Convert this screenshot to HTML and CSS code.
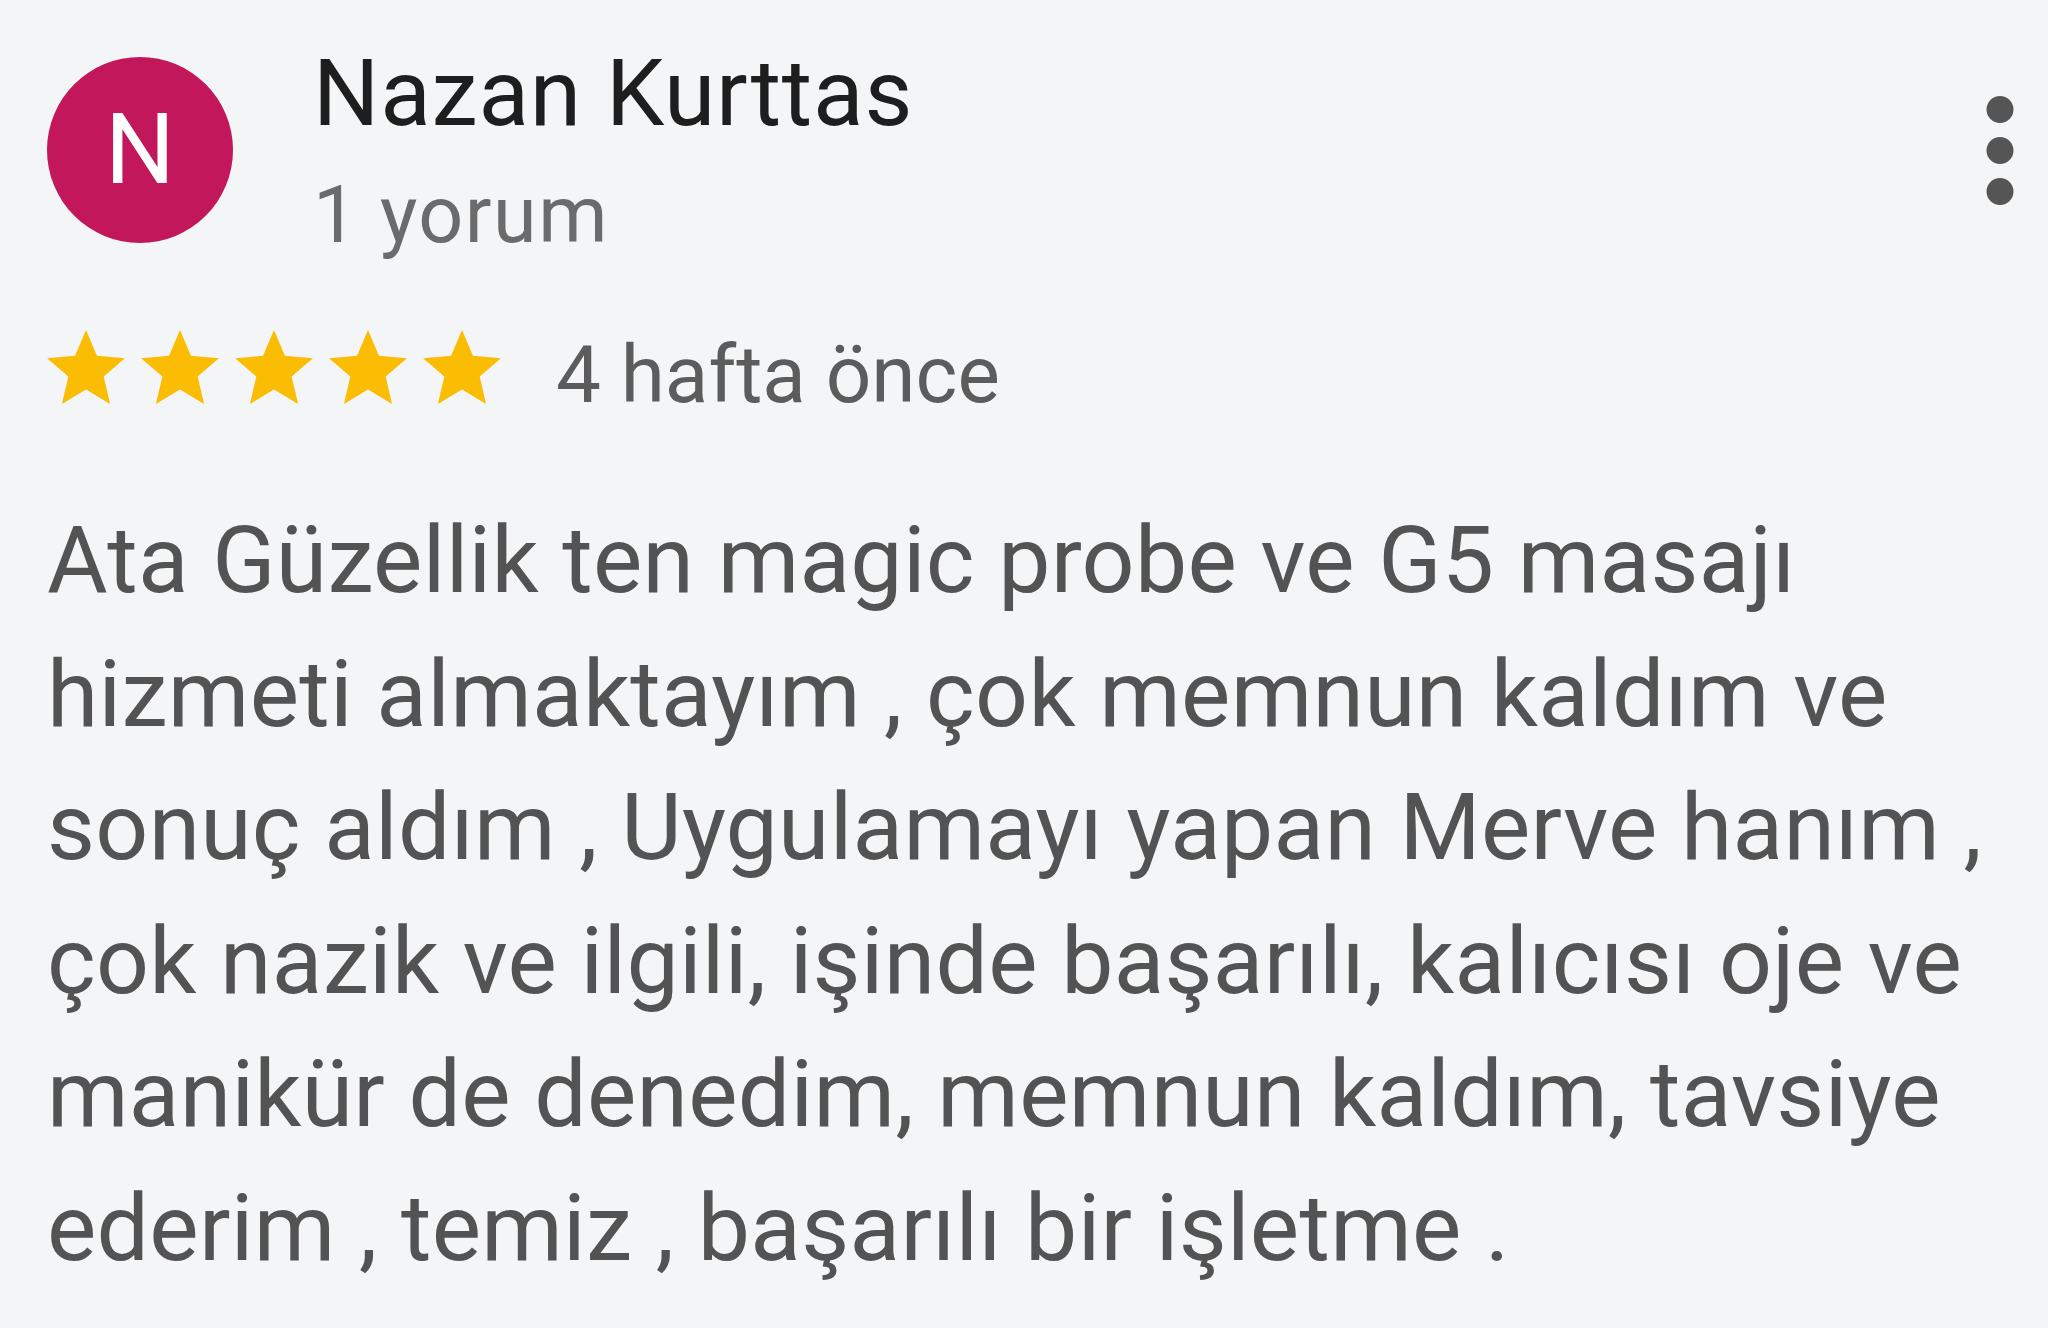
FILE: index.html
```html
<!DOCTYPE html>
<html lang="tr">
<head>
    <meta charset="UTF-8">
    <meta name="viewport" content="width=device-width, initial-scale=1.0">
    <title>Yorum</title>
    <link rel="stylesheet" href="styles.css">
</head>
<body>
    <div class="review">
        <div class="review-header">
            <div class="avatar">N</div>
            <div class="author">
                <div class="author-name">Nazan Kurttas</div>
                <div class="author-count">1 yorum</div>
            </div>
            <svg class="menu" viewBox="0 0 28 110" width="28" height="110">
                <circle cx="14" cy="13.5" r="13.5"/>
                <circle cx="14" cy="54.5" r="13.5"/>
                <circle cx="14" cy="95.5" r="13.5"/>
            </svg>
        </div>

        <div class="rating">
            <div class="stars">
                <svg class="star" viewBox="2 2 20 19"><path d="M12 17.27L18.18 21l-1.64-7.03L22 9.24l-7.19-.61L12 2 9.19 8.63 2 9.24l5.46 4.73L5.82 21z"/></svg>
                <svg class="star" viewBox="2 2 20 19"><path d="M12 17.27L18.18 21l-1.64-7.03L22 9.24l-7.19-.61L12 2 9.19 8.63 2 9.24l5.46 4.73L5.82 21z"/></svg>
                <svg class="star" viewBox="2 2 20 19"><path d="M12 17.27L18.18 21l-1.64-7.03L22 9.24l-7.19-.61L12 2 9.19 8.63 2 9.24l5.46 4.73L5.82 21z"/></svg>
                <svg class="star" viewBox="2 2 20 19"><path d="M12 17.27L18.18 21l-1.64-7.03L22 9.24l-7.19-.61L12 2 9.19 8.63 2 9.24l5.46 4.73L5.82 21z"/></svg>
                <svg class="star" viewBox="2 2 20 19"><path d="M12 17.27L18.18 21l-1.64-7.03L22 9.24l-7.19-.61L12 2 9.19 8.63 2 9.24l5.46 4.73L5.82 21z"/></svg>
            </div>
            <span class="date">4 hafta önce</span>
        </div>

        <p class="review-text">Ata Güzellik ten magic probe ve G5 masajı hizmeti almaktayım , çok memnun kaldım ve sonuç aldım , Uygulamayı yapan Merve hanım , çok nazik ve ilgili, işinde başarılı, kalıcısı oje ve manikür de denedim, memnun kaldım, tavsiye ederim , temiz , başarılı bir işletme .</p>
    </div>
</body>
</html>
```

FILE: styles.css
```css
body {
    margin: 0;
    padding: 0;
    background-color: #f4f5f7;
    font-family: Roboto, "Liberation Sans", Arial, sans-serif;
}
.review {
    padding: 47px 34px 0 47px;
}
.review-header {
    display: flex;
    align-items: flex-start;
}
.avatar {
    width: 186px;
    height: 186px;
    margin-top: 10px;
    margin-right: 80px;
    border-radius: 50%;
    background-color: #c2185b;
    color: #ffffff;
    font-size: 98px;
    line-height: 1;
    display: flex;
    justify-content: center;
    align-items: center;
    flex-shrink: 0;
}
.author-name {
    font-size: 93px;
    line-height: 93px;
    letter-spacing: 0.8px;
    color: #1e1e1e;
}
.author-count {
    margin-top: 36px;
    font-size: 79px;
    line-height: 79px;
    letter-spacing: 1.5px;
    color: #6b6b6b;
}
.menu {
    margin-left: auto;
    margin-top: 49px;
    fill: #555555;
}
.rating {
    display: flex;
    align-items: flex-start;
    margin-top: 75px;
}
.stars {
    display: flex;
    gap: 16px;
    margin-right: 55px;
}
.star {
    width: 78px;
    height: 74px;
    fill: #fbbc04;
}
.date {
    margin-top: 5px;
    font-size: 80px;
    line-height: 80px;
    color: #5c5c5c;
}
.review-text {
    margin: 79px 0 0 0;
    font-size: 93px;
    line-height: 133.5px;
    letter-spacing: 0.3px;
    color: #535353;
}
```
